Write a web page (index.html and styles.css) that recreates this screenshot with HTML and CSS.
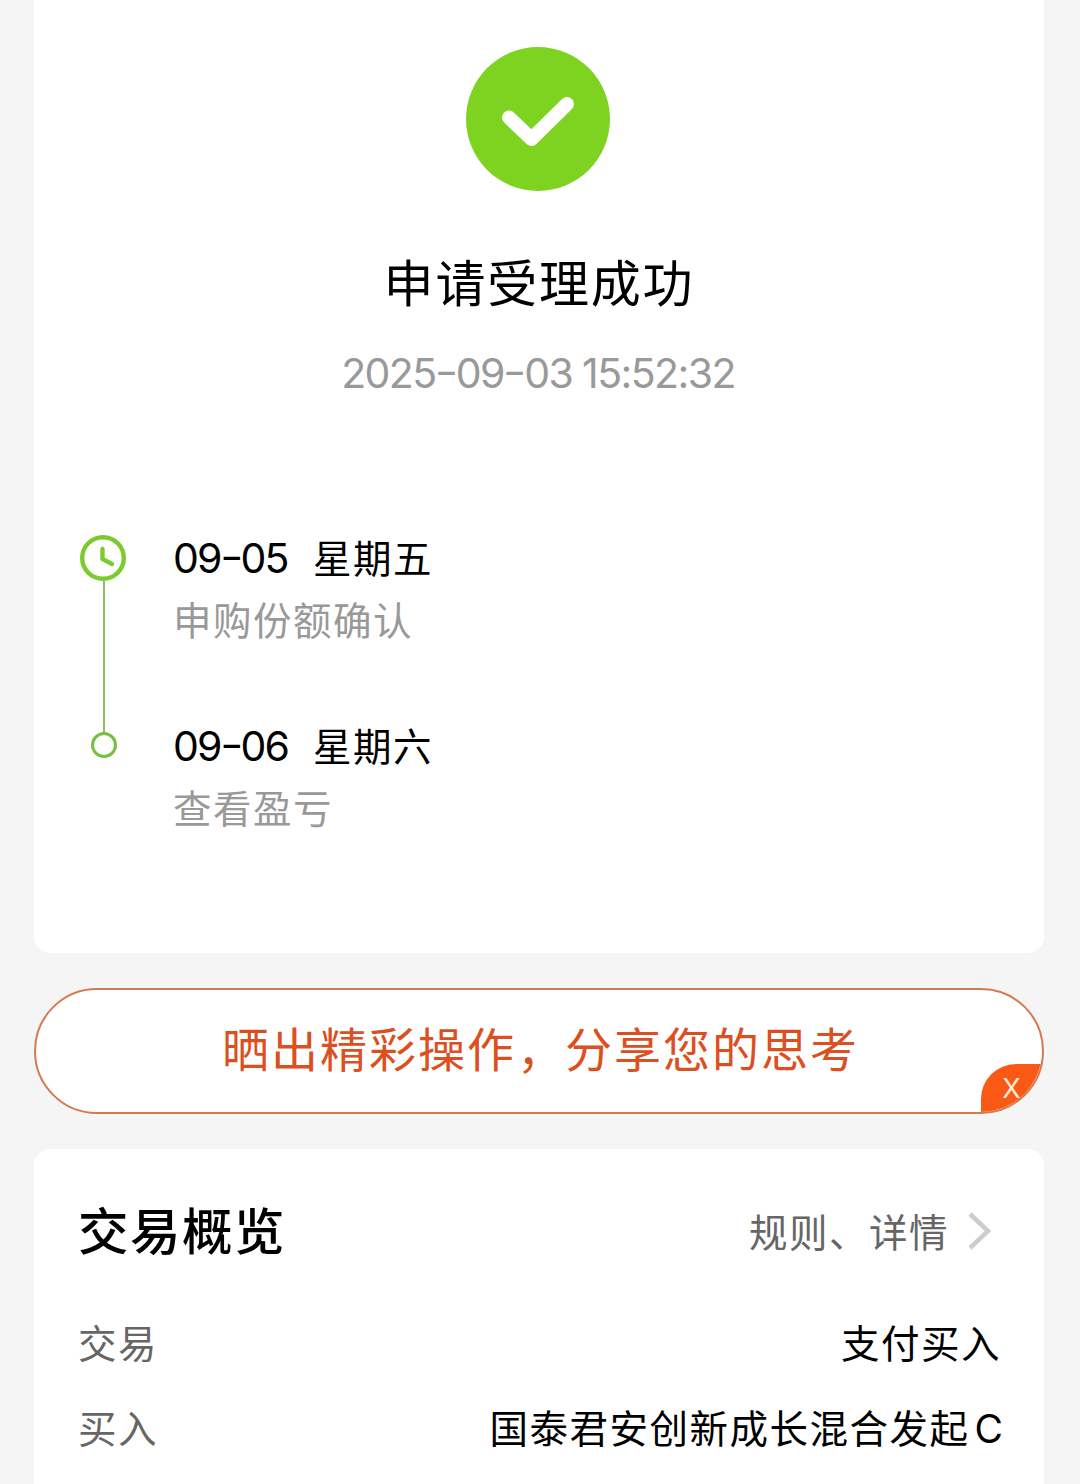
FILE: index.html
```html
<!DOCTYPE html>
<html lang="zh-CN">
<head>
<meta charset="utf-8">
<title>申请受理成功</title>
<link rel="stylesheet" href="styles.css">
</head>
<body>
<main class="page">
  <section class="card result">
    <svg class="success" viewBox="0 0 144 144" aria-hidden="true">
      <circle cx="72" cy="72" r="72"/>
      <path d="M43 70.500L65.500 92L101 57"/>
    </svg>
    <h1 class="title">申请受理成功</h1>
    <p class="time">2025<span class="dash">-</span>09<span class="dash">-</span>03 15:52:32</p>
    <ol class="timeline">
      <li class="step">
        <div class="rail">
          <svg class="clock" viewBox="0 0 46 46" aria-hidden="true">
            <circle cx="23" cy="23" r="20.800"/>
            <path d="M22.500 14V24L32 29"/>
          </svg>
          <span class="line"></span>
        </div>
        <div class="info">
          <p class="date"><span class="num">09<span class="dash">-</span>05</span><span class="day">星期五</span></p>
          <p class="note">申购份额确认</p>
        </div>
      </li>
      <li class="step">
        <div class="rail"><span class="dot"></span></div>
        <div class="info">
          <p class="date"><span class="num">09<span class="dash">-</span>06</span><span class="day">星期六</span></p>
          <p class="note">查看盈亏</p>
        </div>
      </li>
    </ol>
  </section>

  <section class="banner">
    <p class="slogan">晒出精彩操作<span class="comma">，</span>分享您的思考</p>
    <button class="close" type="button">X</button>
  </section>

  <section class="card overview">
    <header class="head">
      <h2 class="heading">交易概览</h2>
      <a class="more"><span>规则、详情</span>
        <svg class="chevron" viewBox="0 0 24 40" aria-hidden="true"><path d="M2 3L20 20L2 37"/></svg>
      </a>
    </header>
    <div class="row"><span class="label">交易</span><span class="value">支付买入</span></div>
    <div class="row"><span class="label">买入</span><span class="value fund">国泰君安创新成长混合发起<span class="latin">C</span></span></div>
  </section>
</main>
</body>
</html>
```
FILE: styles.css
```css
* { box-sizing: border-box; margin: 0; padding: 0; }

body {
  background: #f5f5f5;
  color: #000;
  font-family: "Noto Sans CJK SC", sans-serif;
  font-size: 38.5px;
  letter-spacing: 1.5px;
}

.page {
  display: flex;
  flex-direction: column;
  gap: 35px;
  height: 1484px;
  padding: 0 36px 0 34px;
  overflow: hidden;
}

.card { flex: none; background: #fff; }

.result {
  display: flex;
  flex-direction: column;
  align-items: center;
  height: 953px;
  padding-top: 47px;
  border-radius: 0 0 16px 16px;
}

.success { width: 144px; height: 144px; margin-right: 2px; }
.success circle { fill: #7ed321; }
.success path {
  fill: none;
  stroke: #fff;
  stroke-width: 14px;
  stroke-linecap: round;
  stroke-linejoin: round;
}

.title {
  margin-top: 54px;
  font-size: 50px;
  font-weight: 400;
  line-height: 70px;
  letter-spacing: 1.8px;
}

.time {
  margin: 28px 2px 0 0;
  color: #999;
  font-family: Inter, sans-serif;
  font-size: 41px;
  line-height: 60px;
  letter-spacing: -1.6px;
}

.dash { display: inline-block; margin: 0 2px 0 1px; transform: translateY(-2px) scaleX(1.25); }

.timeline {
  align-self: stretch;
  margin-top: 124px;
  padding-left: 46px;
  list-style: none;
}

.step { display: flex; gap: 47px; height: 188px; }

.rail {
  display: flex;
  flex: none;
  flex-direction: column;
  align-items: center;
  width: 46px;
  padding-top: 8px;
}

.clock { flex: none; width: 46px; height: 46px; }
.clock circle { fill: none; stroke: #7acb2b; stroke-width: 4.4px; }
.clock path {
  fill: none;
  stroke: #7acb2b;
  stroke-width: 4.4px;
  stroke-linecap: round;
  stroke-linejoin: round;
}

.line { flex: none; width: 2px; height: 153px; margin-left: 2px; background: #88bd62; }

.dot {
  width: 26px;
  height: 26px;
  margin: 9px 0 0 1px;
  border: 3px solid #79bf42;
  border-radius: 50%;
}

.date { display: flex; gap: 27px; height: 61px; line-height: 62px; }
.day { line-height: 58px; }
.num { width: 113px; font-family: Inter, sans-serif; font-size: 41px; letter-spacing: -1.9px; white-space: nowrap; }
.note { color: #999; line-height: 60px; }

.banner {
  position: relative;
  display: flex;
  flex: none;
  align-items: center;
  justify-content: center;
  height: 126px;
  overflow: hidden;
  background: #fff;
  border: 2px solid #d47a53;
  border-radius: 63px;
}

.slogan {
  padding: 0 0 8px 3px;
  color: #db4f20;
  font-size: 47px;
  line-height: 70px;
  letter-spacing: 2px;
}
.comma { position: relative; top: 1px; left: 1px; }

.close {
  position: absolute;
  right: 0;
  bottom: 0;
  width: 61px;
  height: 48px;
  padding-top: 2px;
  border: 0;
  border-radius: 35px 0 0 0;
  background: #fa5915;
  color: #ffe9d8;
  font: 27px/46px Inter, sans-serif;
}

.overview { height: 360px; padding: 37px 43px 0 44px; border-radius: 16px 16px 0 0; }

.head { display: flex; align-items: center; justify-content: space-between; height: 84px; }
.heading { font-size: 50.5px; font-weight: 500; letter-spacing: 1.5px; }
.more { display: flex; align-items: center; gap: 19px; padding: 3px 9px 0 0; color: #666; }
.chevron { width: 24px; height: 40px; margin-top: 2px; fill: none; stroke: #ccc; stroke-width: 4.5px; }

.row { display: flex; align-items: center; justify-content: space-between; height: 85px; }
.head + .row { margin-top: 28px; }
.label { color: #666; }
.fund { margin-right: -2px; }
.latin { margin-left: 5px; font-family: Inter, sans-serif; font-size: 39px; letter-spacing: 0; }
```
